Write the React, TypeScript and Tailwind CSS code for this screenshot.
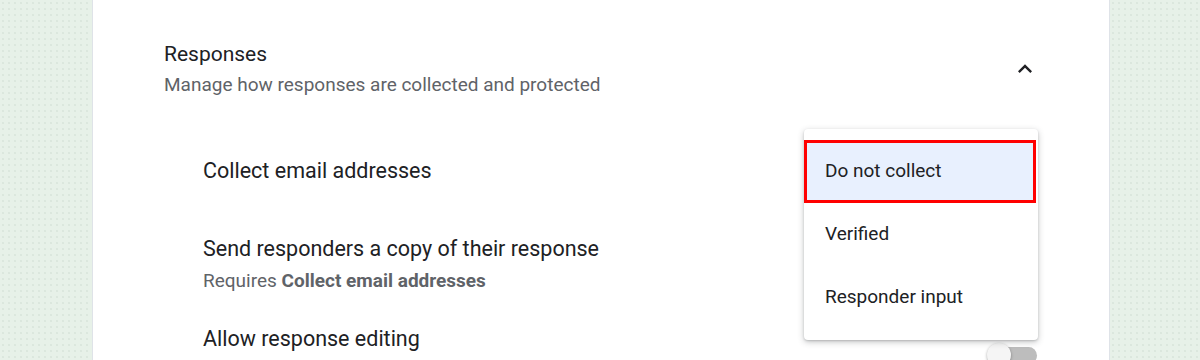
import React from "react";

function Toggle() {
  return (
    <div className="relative w-[50px] h-[24px]">
      <div className="absolute left-[10px] top-[4px] w-[40px] h-[17px] rounded-full bg-[#bdbdbd]" />
      <div className="absolute left-0 top-0 w-[24px] h-[24px] rounded-full bg-[#f5f5f5] shadow-[0_1px_3px_rgba(0,0,0,0.35)]" />
    </div>
  );
}

export default function App() {
  return (
    <div className="relative w-[1200px] h-[360px] overflow-hidden bg-[#e7f1e8] bg-[radial-gradient(#d6e2d7_0.6px,transparent_0.9px)] bg-[length:6px_6px] font-['Roboto',sans-serif]">
      <div className="ml-[92px] w-[1018px] h-[360px] bg-white border-x border-[#dfe3e8]">
        <div className="flex items-start pl-[71px] pr-[70px] pt-[40px]">
          <div className="flex-1">
            <div className="text-[21px] leading-[28px] text-[#202124]">Responses</div>
            <div className="text-[19px] leading-[24px] text-[#5f6368] mt-[5px]">
              Manage how responses are collected and protected
            </div>
          </div>
          <svg className="mt-[15px]" width="28" height="28" viewBox="0 0 24 24" fill="#202124">
            <path d="M7.41 15.41 12 10.83l4.59 4.58L18 14l-6-6-6 6z" />
          </svg>
        </div>

        <div className="pl-[110px] pr-[72px]">
          <div className="mt-[59px] text-[21.5px] leading-[30px] text-[#202124]">
            Collect email addresses
          </div>
          <div className="mt-[48px]">
            <div className="text-[21.5px] leading-[30px] text-[#202124]">
              Send responders a copy of their response
            </div>
            <div className="mt-[5px] text-[19px] leading-[24px] text-[#5f6368]">
              Requires <span className="font-bold">Collect email addresses</span>
            </div>
          </div>
          <div className="mt-[31px] flex items-start">
            <div className="flex-1 text-[21.5px] leading-[30px] text-[#202124]">
              Allow response editing
            </div>
            <div className="mt-[19px]">
              <Toggle />
            </div>
          </div>
        </div>
      </div>

      <div className="absolute left-[804px] top-[129px] w-[234px] py-[11px] bg-white rounded-[4px] shadow-[0_2px_6px_rgba(60,64,67,0.3),0_1px_2px_rgba(60,64,67,0.2)]">
        <div className="h-[63px] w-[232px] flex items-center pl-[18px] bg-[#e8f0fe] border-[3px] border-[#ff0000] text-[19px] text-[#202124]">
          Do not collect
        </div>
        <div className="h-[63px] flex items-center pl-[21px] text-[19px] text-[#202124]">
          Verified
        </div>
        <div className="h-[63px] flex items-center pl-[21px] text-[19px] text-[#202124]">
          Responder input
        </div>
      </div>
    </div>
  );
}
